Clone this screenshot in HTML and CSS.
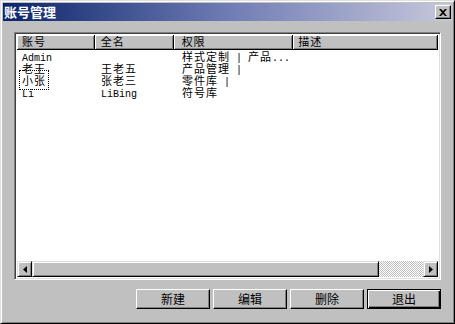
FILE: index.html
```html
<!DOCTYPE html>
<html lang="zh">
<head>
  <meta charset="utf-8">
  <title>账号管理</title>
  <link rel="stylesheet" href="styles.css">
</head>
<body>
  <div class="window">
    <div class="titlebar">
      <span class="title">账号管理</span>
      <span class="close">
        <svg width="8" height="7" viewBox="0 0 8 7"><path d="M0 0h2l2 2 2-2h2L5 3.5 8 7H6L4 5 2 7H0l3-3.5z" fill="#000"/></svg>
      </span>
    </div>

    <div class="content">
      <div class="list">
        <div class="header">
          <div class="hcell c1">账号</div>
          <div class="hcell c2">全名</div>
          <div class="hcell c3">权限</div>
          <div class="hcell c4">描述</div>
        </div>
        <div class="rows">
          <div class="row">
            <div class="cell c1"><span class="en">Admin</span></div>
            <div class="cell c2"></div>
            <div class="cell c3">样式定制<span class="en"> | </span>产品<span class="en">...</span></div>
          </div>
          <div class="row">
            <div class="cell c1">老王</div>
            <div class="cell c2">王老五</div>
            <div class="cell c3">产品管理<span class="en"> |</span></div>
          </div>
          <div class="row">
            <div class="cell c1"><span class="focus">小张</span></div>
            <div class="cell c2">张老三</div>
            <div class="cell c3">零件库<span class="en"> |</span></div>
          </div>
          <div class="row">
            <div class="cell c1"><span class="en">Li</span></div>
            <div class="cell c2"><span class="en">LiBing</span></div>
            <div class="cell c3">符号库</div>
          </div>
        </div>
        <div class="hscroll">
          <div class="arrow">
            <svg width="4" height="7" viewBox="0 0 4 7"><path d="M4 0v7L0 3.5z" fill="#000"/></svg>
          </div>
          <div class="thumb"></div>
          <div class="track"></div>
          <div class="arrow">
            <svg width="4" height="7" viewBox="0 0 4 7"><path d="M0 0v7l4-3.5z" fill="#000"/></svg>
          </div>
        </div>
      </div>

      <div class="buttons">
        <button class="btn">新建</button>
        <button class="btn">编辑</button>
        <button class="btn">删除</button>
        <button class="btn default">退出</button>
      </div>
    </div>
  </div>
</body>
</html>
```

FILE: styles.css
```css
html {
  height: 100%;
}
body {
  margin: 0;
  padding: 0;
  background: #c0c0c0;
  font-family: "Noto Sans CJK SC", sans-serif;
  font-size: 12px;
  color: #000;
}
.window {
  width: 455px;
  height: 324px;
  box-sizing: border-box;
  border: 1px solid;
  border-color: #dfdfdf #000 #000 #dfdfdf;
  box-shadow: inset 1px 1px #fff, inset -1px -1px #808080;
  padding: 2px;
  background: #c0c0c0;
  display: flex;
  flex-direction: column;
}
.titlebar {
  height: 18px;
  display: flex;
  align-items: center;
  justify-content: space-between;
  padding: 0 1px 0 1px;
  background: linear-gradient(to right, #0a246a, #6f7cb4 50%, #c8c8dc);
}
.title {
  color: #fff;
  font-weight: bold;
  font-size: 13px;
  line-height: 18px;
}
.close {
  width: 16px;
  height: 14px;
  box-sizing: border-box;
  background: #c0c0c0;
  border: 1px solid;
  border-color: #fff #000 #000 #fff;
  box-shadow: inset -1px -1px #808080;
  display: flex;
  align-items: center;
  justify-content: center;
}
.content {
  flex: 1;
  display: flex;
  flex-direction: column;
  padding: 11px 11px 0 11px;
}
.list {
  height: 248px;
  box-sizing: border-box;
  border: 1px solid;
  border-color: #808080 #fff #fff #808080;
  box-shadow: inset 1px 1px #404040, inset -1px -1px #dfdfdf;
  padding: 2px;
  background: #fff;
  display: flex;
  flex-direction: column;
}
.header {
  display: flex;
  height: 15px;
  background: #c0c0c0;
  flex-shrink: 0;
}
.hcell {
  box-sizing: border-box;
  height: 15px;
  line-height: 13px;
  padding-left: 5px;
  font-size: 11px;
  letter-spacing: 1px;
  border-right: 1px solid #000;
  border-bottom: 1px solid #000;
  box-shadow: inset 1px 1px #fff, inset -1px -1px #808080;
  white-space: nowrap;
}
.c1 { width: 78px; }
.c2 { width: 79px; }
.c3 { width: 120px; }
.c4 { width: 145px; }
.rows {
  flex: 1;
  font-size: 11px;
  letter-spacing: 1px;
}
.row {
  display: flex;
  height: 12px;
  line-height: 12px;
}
.cell {
  box-sizing: border-box;
  padding-left: 5px;
  white-space: nowrap;
}
.cell.c2, .hcell.c2 { padding-left: 6px; }
.cell.c3, .hcell.c3 { padding-left: 8px; }
.en {
  font-family: "Liberation Mono", monospace;
  font-size: 10px;
  letter-spacing: 0;
}
.focus {
  outline: 1px dotted #000;
  outline-offset: 1px;
  padding: 0 1px;
  margin-left: -1px;
}
.hscroll {
  height: 16px;
  display: flex;
  flex-shrink: 0;
}
.arrow, .thumb {
  box-sizing: border-box;
  height: 16px;
  background: #c0c0c0;
  border: 1px solid;
  border-color: #dfdfdf #000 #000 #dfdfdf;
  box-shadow: inset 1px 1px #fff, inset -1px -1px #808080;
}
.arrow {
  width: 15px;
  display: flex;
  align-items: center;
  justify-content: center;
}
.thumb {
  width: 347px;
}
.track {
  flex: 1;
  background: repeating-conic-gradient(#fff 0 25%, #c0c0c0 0 50%) 0 0 / 2px 2px;
}
.buttons {
  display: flex;
  justify-content: flex-end;
  gap: 3px;
  margin-top: 9px;
}
.btn {
  width: 74px;
  height: 20px;
  box-sizing: border-box;
  margin: 0;
  padding: 0;
  font-family: "Noto Sans CJK SC", sans-serif;
  font-size: 12px;
  line-height: 16px;
  color: #000;
  background: #c0c0c0;
  border: 1px solid;
  border-color: #fff #000 #000 #fff;
  box-shadow: inset -1px -1px #808080;
}
.btn.default {
  border: 1px solid #000;
  box-shadow: inset 1px 1px #fff, inset -1px -1px #000, inset -2px -2px #808080;
}
```
